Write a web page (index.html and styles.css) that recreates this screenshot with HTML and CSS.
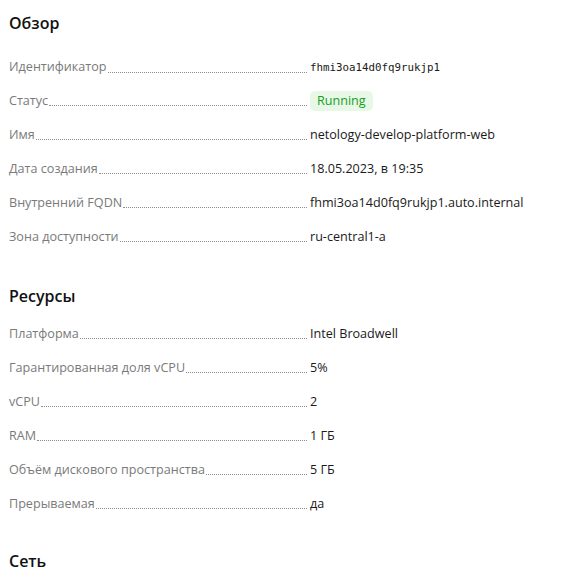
FILE: index.html
```html
<!DOCTYPE html>
<html lang="ru">
<head>
<meta charset="utf-8">
<link rel="stylesheet" href="styles.css">
</head>
<body>
<section class="section section-first">
  <h2 class="title">Обзор</h2>
  <div class="list">
    <div class="row"><span class="label">Идентификатор</span><span class="dots"></span><span class="value mono">fhmi3oa14d0fq9rukjp1</span></div>
    <div class="row"><span class="label">Статус</span><span class="dots"></span><span class="value"><span class="badge">Running</span></span></div>
    <div class="row"><span class="label">Имя</span><span class="dots"></span><span class="value">netology-develop-platform-web</span></div>
    <div class="row"><span class="label">Дата создания</span><span class="dots"></span><span class="value">18.05.2023, в 19:35</span></div>
    <div class="row"><span class="label">Внутренний FQDN</span><span class="dots"></span><span class="value">fhmi3oa14d0fq9rukjp1.auto.internal</span></div>
    <div class="row"><span class="label">Зона доступности</span><span class="dots"></span><span class="value">ru-central1-a</span></div>
  </div>
</section>
<section class="section">
  <h2 class="title">Ресурсы</h2>
  <div class="list">
    <div class="row"><span class="label">Платформа</span><span class="dots"></span><span class="value">Intel Broadwell</span></div>
    <div class="row"><span class="label">Гарантированная доля vCPU</span><span class="dots"></span><span class="value">5%</span></div>
    <div class="row"><span class="label">vCPU</span><span class="dots"></span><span class="value">2</span></div>
    <div class="row"><span class="label">RAM</span><span class="dots"></span><span class="value">1 ГБ</span></div>
    <div class="row"><span class="label">Объём дискового пространства</span><span class="dots"></span><span class="value">5 ГБ</span></div>
    <div class="row"><span class="label">Прерываемая</span><span class="dots"></span><span class="value">да</span></div>
  </div>
</section>
<section class="section section-last">
  <h2 class="title">Сеть</h2>
</section>
</body>
</html>
```
FILE: styles.css
```css
html, body {
  margin: 0;
  padding: 0;
  background: #fff;
}
body {
  padding: 0 9px;
  font-family: "Open Sans", "Noto Sans", sans-serif;
  font-size: 12.6px;
  color: #000;
}
.section {
  display: flex;
  flex-direction: column;
  padding-top: 39px;
}
.section-first {
  padding-top: 13px;
}
.section-last {
  padding-top: 37px;
}
.title {
  margin: 0;
  font-size: 16px;
  line-height: 20px;
  font-weight: 600;
  color: #111;
}
.list {
  display: flex;
  flex-direction: column;
  gap: 14px;
  margin-top: 18px;
}
.section-first .list {
  margin-top: 24px;
}
.row {
  display: grid;
  grid-template-columns: auto 1fr 245px;
  align-items: baseline;
  width: 546px;
  height: 20px;
  line-height: 20px;
}
.label {
  color: #7a7a7a;
  white-space: nowrap;
}
.dots {
  border-bottom: 1px dotted #8c8c8c;
  margin: 0 3px 0 1px;
  align-self: end;
  height: 0;
  position: relative;
  top: -5px;
}
.value {
  color: #1a1a1a;
  white-space: nowrap;
}
.mono {
  font-family: "DejaVu Sans Mono", monospace;
  font-size: 10.8px;
}
.badge {
  display: inline-block;
  padding: 0 7px;
  height: 20px;
  line-height: 20px;
  border-radius: 5px;
  background: #e7f8e7;
  color: #199e1e;
}
```
